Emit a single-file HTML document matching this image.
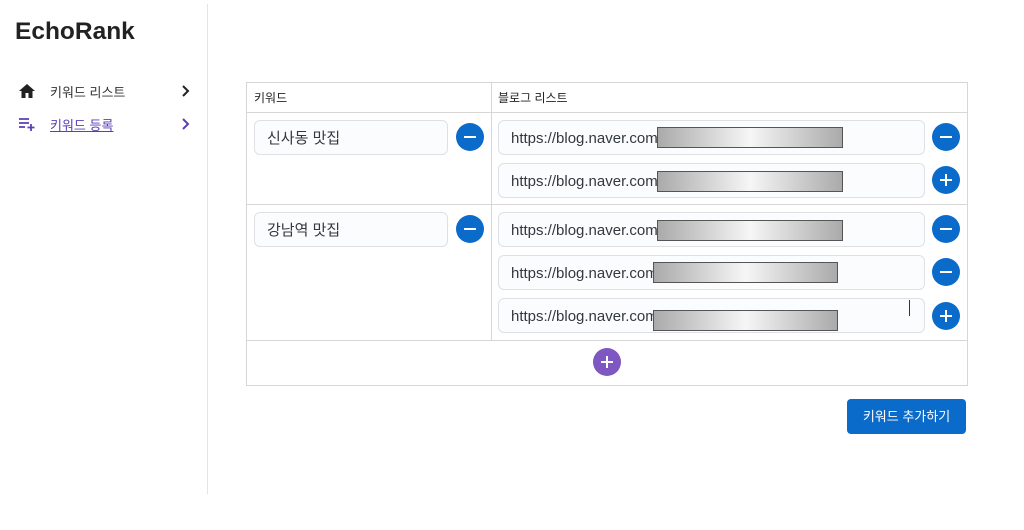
<!DOCTYPE html>
<html><head><meta charset="utf-8"><style>
*{box-sizing:border-box;margin:0;padding:0}
body{width:1024px;height:530px;background:#fff;font-family:"Liberation Sans","Noto Sans CJK KR",sans-serif;position:relative;overflow:hidden;color:#222}
.a{position:absolute}
.inp{position:absolute;border:1px solid #dde1e6;border-radius:6px;background:#fbfcfe;height:35px;font-size:15px;color:#32383e;padding:1px 12px 0;line-height:33px}
.c{position:absolute;width:28px;height:28px;border-radius:50%;background:#0b6bcb}
.c svg{position:absolute;left:0;top:0}
.red{position:absolute;height:21px;border:1px solid #555;background:linear-gradient(90deg,#aaa,#f6f6f6 50%,#aaa)}
.hl{position:absolute;height:1px;background:#d6d6d6}
.vl{position:absolute;width:1px;background:#d6d6d6}
</style></head><body>
<div class="a" style="left:15px;top:18px;font-size:24.5px;font-weight:bold;color:#222">EchoRank</div>
<svg class="a" style="left:18px;top:83px" width="18" height="16" viewBox="0 0 18 16"><path d="M9 1L1 8h2.5v7h4v-5h3v5h4V8H17z" fill="#222"/></svg>
<div class="a" style="left:50px;top:82px;font-size:13px;color:#333">키워드 리스트</div>
<svg class="a" style="left:181px;top:85px" width="10" height="12"><path d="M2 1l5 5-5 5" stroke="#222" stroke-width="2" fill="none"/></svg>
<svg class="a" style="left:18px;top:117px" width="18" height="14"><path d="M1 2h10M1 6h10M1 10h6M13 7v7M9.5 10.5h7" stroke="#5b3fb5" stroke-width="1.8" fill="none"/></svg>
<div class="a" style="left:50px;top:115px;font-size:13px;color:#5b3fb5;text-decoration:underline">키워드 등록</div>
<svg class="a" style="left:181px;top:118px" width="10" height="12"><path d="M2 1l5 5-5 5" stroke="#5b3fb5" stroke-width="2" fill="none"/></svg>
<div class="vl" style="left:207px;top:4px;height:490px;background:#e4e4e4"></div>

<div class="a" style="left:246px;top:82px;width:722px;height:304px;border:1px solid #d6d6d6"></div>
<div class="hl" style="left:247px;top:112px;width:720px"></div>
<div class="hl" style="left:247px;top:204px;width:720px"></div>
<div class="hl" style="left:247px;top:340px;width:720px"></div>
<div class="vl" style="left:491px;top:82px;height:258px"></div>
<div class="a" style="left:254px;top:89px;font-size:12px;color:#222">키워드</div>
<div class="a" style="left:498px;top:89px;font-size:12px;color:#222">블로그 리스트</div>

<div class="inp" style="left:254px;top:120px;width:194px">신사동 맛집</div>
<div class="inp" style="left:254px;top:212px;width:194px">강남역 맛집</div>
<div class="c" style="left:456px;top:123px"><svg width="28" height="28"><path d="M8 14h12" stroke="#fff" stroke-width="2"/></svg></div>
<div class="c" style="left:456px;top:215px"><svg width="28" height="28"><path d="M8 14h12" stroke="#fff" stroke-width="2"/></svg></div>

<div class="inp" style="left:498px;top:120px;width:427px">https://blog.naver.com/</div>
<div class="inp" style="left:498px;top:163px;width:427px">https://blog.naver.com/</div>
<div class="inp" style="left:498px;top:212px;width:427px">https://blog.naver.com/</div>
<div class="inp" style="left:498px;top:255px;width:427px">https://blog.naver.com</div>
<div class="inp" style="left:498px;top:298px;width:427px">https://blog.naver.com</div>
<div class="a" style="left:909px;top:300px;width:1px;height:16px;background:#333"></div>
<div class="red" style="left:657px;top:127px;width:186px"></div>
<div class="red" style="left:657px;top:171px;width:186px"></div>
<div class="red" style="left:657px;top:220px;width:186px"></div>
<div class="red" style="left:653px;top:262px;width:185px"></div>
<div class="red" style="left:653px;top:310px;width:185px"></div>

<div class="c" style="left:932px;top:123px"><svg width="28" height="28"><path d="M8 14h12" stroke="#fff" stroke-width="2"/></svg></div>
<div class="c" style="left:932px;top:166px"><svg width="28" height="28"><path d="M8 14h12M14 8v12" stroke="#fff" stroke-width="2"/></svg></div>
<div class="c" style="left:932px;top:215px"><svg width="28" height="28"><path d="M8 14h12" stroke="#fff" stroke-width="2"/></svg></div>
<div class="c" style="left:932px;top:258px"><svg width="28" height="28"><path d="M8 14h12" stroke="#fff" stroke-width="2"/></svg></div>
<div class="c" style="left:932px;top:302px"><svg width="28" height="28"><path d="M8 14h12M14 8v12" stroke="#fff" stroke-width="2"/></svg></div>
<div class="c" style="left:593px;top:348px;background:#7e57c2"><svg width="28" height="28"><path d="M8 14h12M14 8v12" stroke="#fff" stroke-width="2"/></svg></div>

<div class="a" style="left:847px;top:399px;width:119px;height:35px;background:#0b6bcb;border-radius:4px;color:#fff;font-size:13px;text-align:center;line-height:35px">키워드 추가하기</div>
</body></html>
